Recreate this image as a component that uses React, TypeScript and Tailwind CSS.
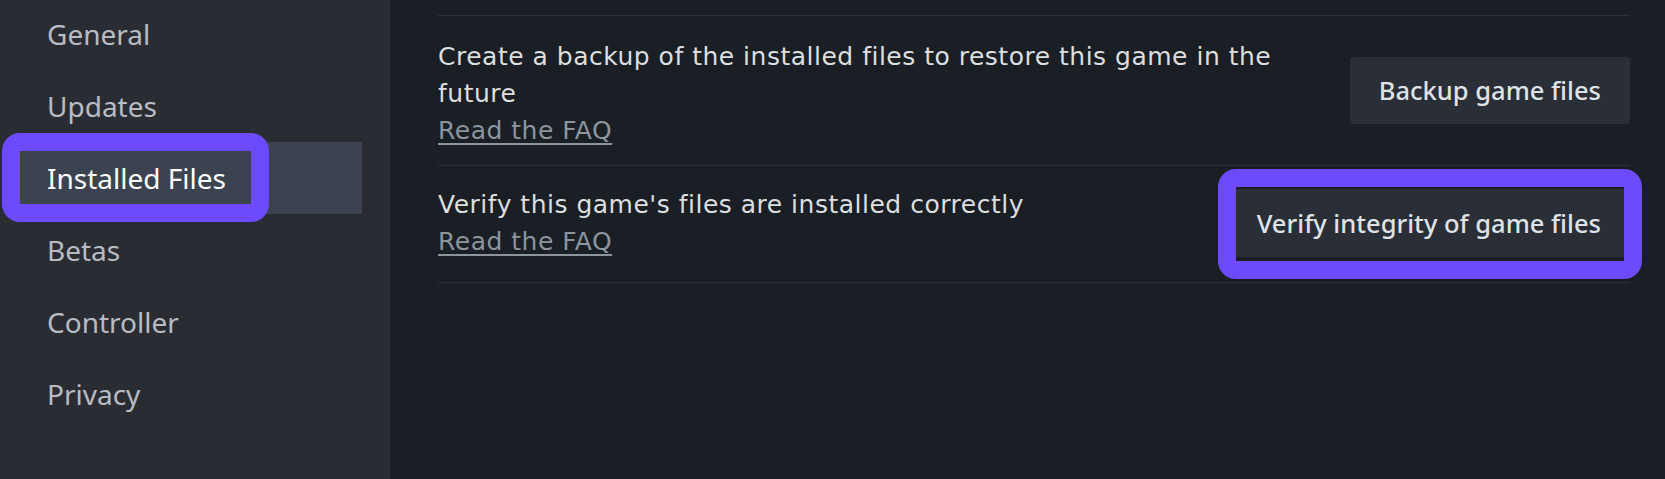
const menu = ["General", "Updates", "Installed Files", "Betas", "Controller", "Privacy"];

function Sidebar() {
  return (
    <aside className="w-[390px] shrink-0 bg-[#2a2c33] font-['Noto_Sans',sans-serif]">
      <ul className="mt-[-2px] flex flex-col pl-[18px] pr-[28px]">
        {menu.map((item) => {
          const active = item === "Installed Files";
          return (
            <li
              key={item}
              className={
                active
                  ? "relative flex h-[72px] items-center bg-[#3c4350] pl-[29px] text-[28px] text-white"
                  : "flex h-[72px] items-center pl-[29px] text-[28px] text-[#b8bcc2]"
              }
            >
              {item}
              {active && (
                <span className="pointer-events-none absolute left-[-16px] top-[-9px] h-[89px] w-[267px] rounded-[18px] border-[18px] border-[#6e4aff]" />
              )}
            </li>
          );
        })}
      </ul>
    </aside>
  );
}

function FaqLink() {
  return (
    <a href="#" className="text-[#8c949c] underline decoration-[2px] underline-offset-[4px]">
      Read the FAQ
    </a>
  );
}

export default function App() {
  return (
    <div className="flex h-[479px] w-[1665px] overflow-hidden bg-[#1a1e25]">
      <Sidebar />

      <main className="flex-1 pl-[48px] pr-[35px] pt-[15px] font-['DejaVu_Sans',sans-serif]">
        {/* Backup */}
        <div className="flex h-[150px] items-center justify-between border-t border-[#2d323a]">
          <div className="flex w-[850px] flex-col pt-[5px] text-[25px] leading-[37px] tracking-[0.5px] text-[#dcdedf]">
            <p>Create a backup of the installed files to restore this game in the future</p>
            <FaqLink />
          </div>
          <button className="h-[67px] rounded-[3px] bg-[#2a2e36] px-[29px] font-['Noto_Sans',sans-serif] text-[25.5px] font-medium text-[#dfe3e6]">
            Backup game files
          </button>
        </div>

        {/* Verify */}
        <div className="flex h-[118px] items-center justify-between border-y border-[#2d323a] pb-[2px]">
          <div className="flex flex-col text-[25px] leading-[37px] tracking-[0.5px] text-[#dcdedf]">
            <p>Verify this game's files are installed correctly</p>
            <FaqLink />
          </div>
          <div className="relative">
            <button className="h-[68px] rounded-[3px] bg-[#2a2e36] px-[29px] font-['Noto_Sans',sans-serif] text-[25.5px] font-medium text-[#dfe3e6]">
              Verify integrity of game files
            </button>
            <span className="pointer-events-none absolute bottom-[-22px] left-[-10px] right-[-12px] top-[-20px] rounded-[18px] border-[18px] border-[#6e4aff]" />
          </div>
        </div>
      </main>
    </div>
  );
}
